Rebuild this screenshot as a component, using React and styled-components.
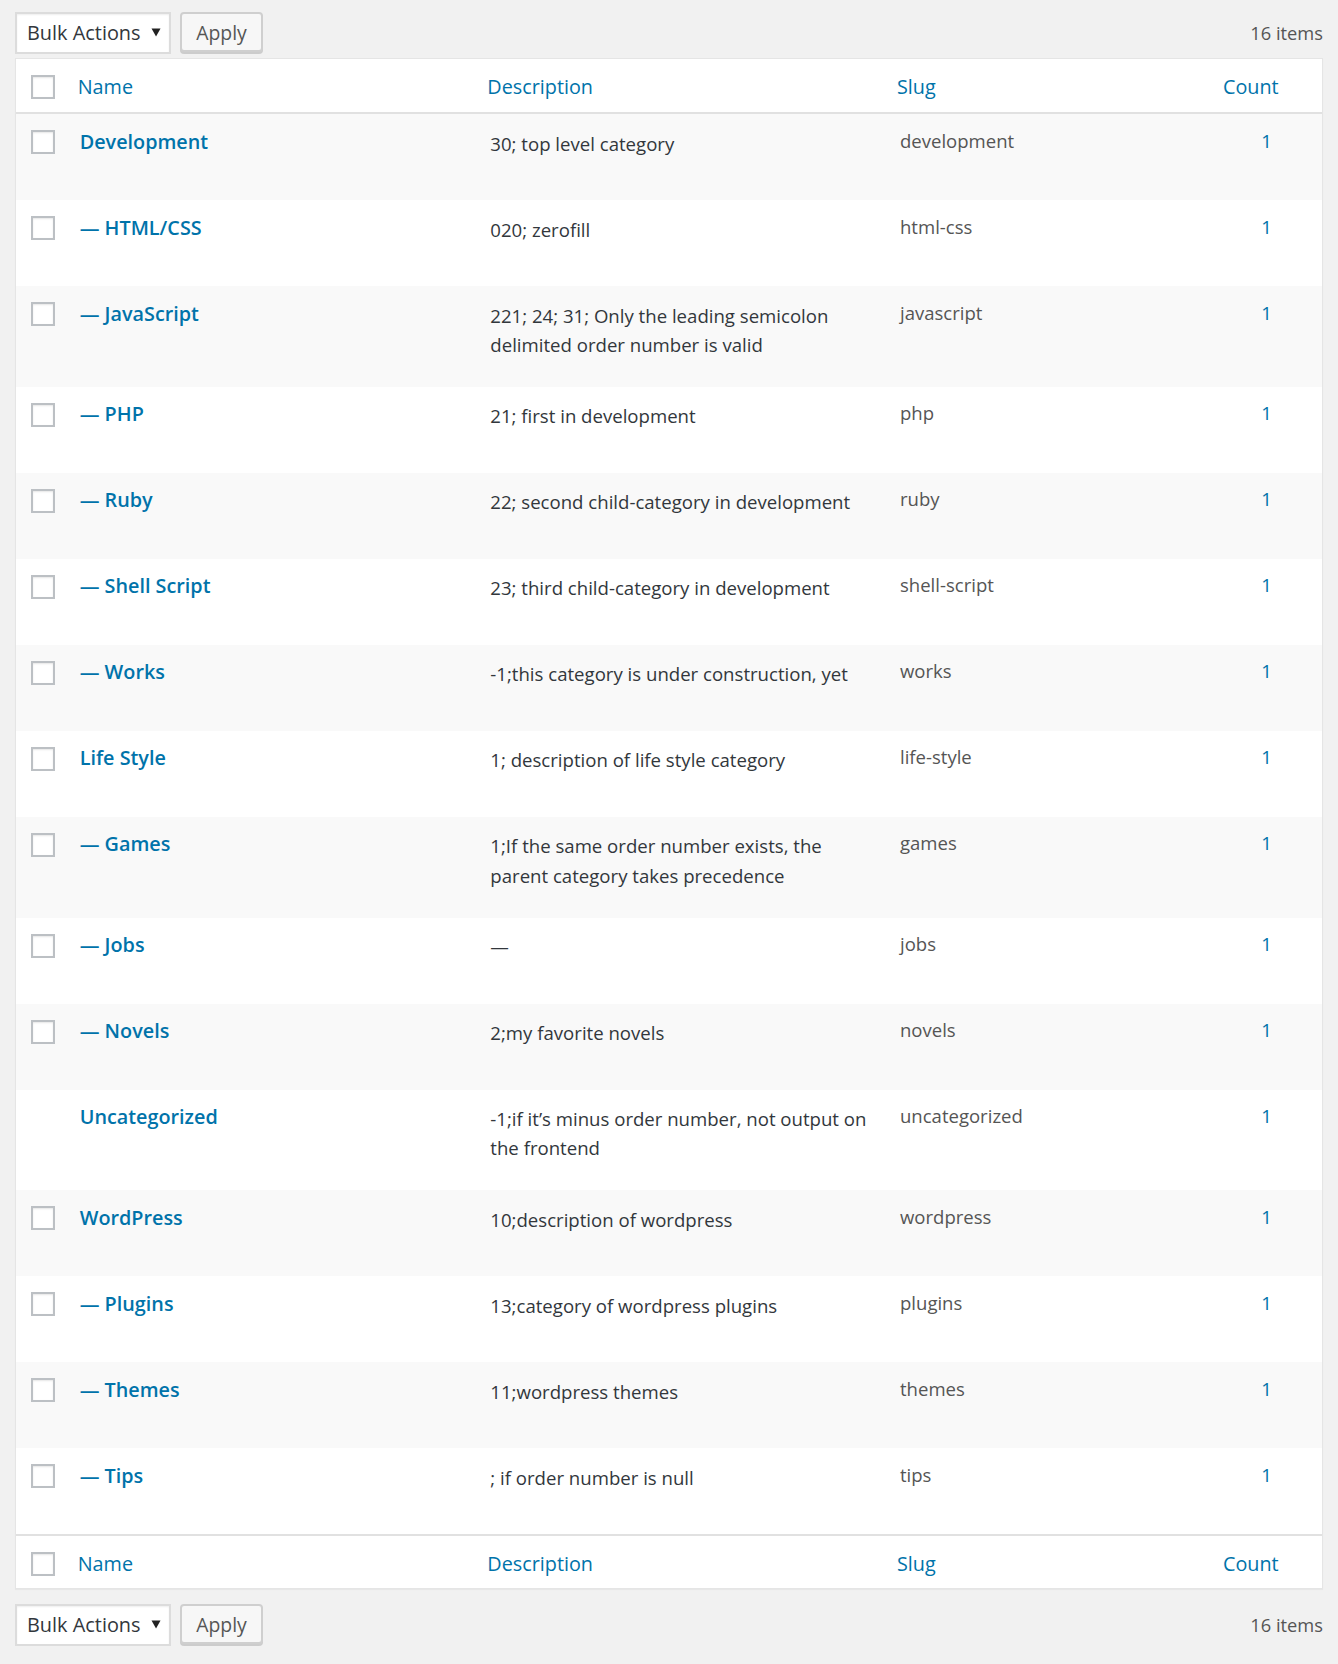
import React from 'react';
import styled, { createGlobalStyle } from 'styled-components';

const GlobalStyle = createGlobalStyle`
  html, body { margin: 0; padding: 0; background: #f1f1f1; }
  body {
    font-family: "Open Sans", "Noto Sans", "Liberation Sans", sans-serif;
    color: #444;
  }
  * { box-sizing: border-box; }
`;

const Page = styled.div`
  padding: 11px 15px 17px 15px;
`;

const TableNav = styled.div`
  display: flex;
  align-items: center;
  justify-content: space-between;
  height: 43px;
  margin: ${(p) => (p.$bottom ? '14px 0 0' : '0 0 4px')};
`;

const Actions = styled.div`
  display: flex;
  align-items: center;
  gap: 9px;
`;

const Select = styled.div`
  display: flex;
  align-items: center;
  justify-content: space-between;
  width: 156px;
  height: 42px;
  padding: 0 8px 0 10px;
  background: #fff;
  border: 2px solid #dcdcdc;
  box-shadow: inset 0 1px 2px rgba(0, 0, 0, 0.07);
  font-size: 19.9px;
  color: #32373c;
`;

const Button = styled.div`
  display: flex;
  align-items: center;
  justify-content: center;
  width: 83px;
  height: 40px;
  margin-top: -1px;
  background: #f7f7f7;
  border: 2px solid #cfcfcf;
  border-radius: 4px;
  box-shadow: 0 2px 0 #cccccc;
  font-size: 19.4px;
  color: #555;
`;

const Displaying = styled.div`
  font-size: 18.3px;
  color: #555;
`;

const Table = styled.div`
  background: #fff;
  border: 1px solid #e5e5e5;
  box-shadow: 0 1px 1px rgba(0, 0, 0, 0.04);
`;

const Grid = styled.div`
  display: grid;
  grid-template-columns: 49.7px 1fr 1fr 326px 111px;
`;

const HeadRow = styled(Grid)`
  background: #fff;
  ${(p) => (p.$foot ? 'border-top: 2px solid #e1e1e1; height: 54px;' : 'border-bottom: 2px solid #e1e1e1; height: 55px;')}
`;

const HeadCell = styled.div`
  padding: 12.8px 12px 0;
  font-size: 19.8px;
  line-height: 29px;
  color: #0073aa;
  white-space: nowrap;
`;

const CheckCell = styled.div`
  padding: ${(p) => (p.$head ? '15.7px' : '16px')} 0 0 15px;
`;

const Checkbox = styled.span`
  display: block;
  width: 24px;
  height: 24px;
  background: #fff;
  border: 2px solid #bcc0c4;
  box-shadow: inset 0 1px 2px rgba(0, 0, 0, 0.1);
`;

const Row = styled(Grid)`
  background: ${(p) => (p.$alt ? '#f9f9f9' : '#fff')};
`;

const NameCell = styled.div`
  padding: 12.5px 14px 11.5px;
`;

const Title = styled.div`
  font-size: 19.8px;
  font-weight: 600;
  line-height: 29.25px;
  color: #0073aa;
  white-space: nowrap;
`;

const RowActions = styled.div`
  height: 32.75px;
`;

const DescCell = styled.div`
  padding: 14.5px 15px 27.75px;
  font-size: 18.6px;
  line-height: 29.25px;
  color: #32373c;
`;

const Line = styled.span`
  display: block;
  white-space: nowrap;
`;

const SlugCell = styled.div`
  padding: 11.5px 15px;
  font-size: 18.55px;
  line-height: 29.25px;
  color: #555;
`;

const CountCell = styled.div`
  padding: 11.5px 10px;
  font-size: 18.5px;
  line-height: 29.25px;
  color: #0073aa;
  text-align: center;
`;

const rows = [
  { name: 'Development', desc: ['30; top level category'], slug: 'development' },
  { name: '— HTML/CSS', desc: ['020; zerofill'], slug: 'html-css' },
  { name: '— JavaScript', desc: ['221; 24; 31; Only the leading semicolon', 'delimited order number is valid'], slug: 'javascript' },
  { name: '— PHP', desc: ['21; first in development'], slug: 'php' },
  { name: '— Ruby', desc: ['22; second child-category in development'], slug: 'ruby' },
  { name: '— Shell Script', desc: ['23; third child-category in development'], slug: 'shell-script' },
  { name: '— Works', desc: ['-1;this category is under construction, yet'], slug: 'works' },
  { name: 'Life Style', desc: ['1; description of life style category'], slug: 'life-style' },
  { name: '— Games', desc: ['1;If the same order number exists, the', 'parent category takes precedence'], slug: 'games' },
  { name: '— Jobs', desc: ['—'], slug: 'jobs' },
  { name: '— Novels', desc: ['2;my favorite novels'], slug: 'novels' },
  { name: 'Uncategorized', desc: ['-1;if it’s minus order number, not output on', 'the frontend'], slug: 'uncategorized', noCheck: true },
  { name: 'WordPress', desc: ['10;description of wordpress'], slug: 'wordpress' },
  { name: '— Plugins', desc: ['13;category of wordpress plugins'], slug: 'plugins' },
  { name: '— Themes', desc: ['11;wordpress themes'], slug: 'themes' },
  { name: '— Tips', desc: ['; if order number is null'], slug: 'tips' },
];

const Arrow = () => (
  <svg width="10" height="9" viewBox="0 0 10 9" aria-hidden="true">
    <path d="M0.5 0.5 L9.5 0.5 L5 8.5 Z" fill="#222" />
  </svg>
);

const Nav = ({ bottom }) => (
  <TableNav $bottom={bottom}>
    <Actions>
      <Select>
        <span>Bulk Actions</span>
        <Arrow />
      </Select>
      <Button>Apply</Button>
    </Actions>
    <Displaying>16 items</Displaying>
  </TableNav>
);

const Header = ({ foot }) => (
  <HeadRow $foot={foot}>
    <CheckCell $head>
      <Checkbox />
    </CheckCell>
    <HeadCell>Name</HeadCell>
    <HeadCell>Description</HeadCell>
    <HeadCell>Slug</HeadCell>
    <HeadCell>Count</HeadCell>
  </HeadRow>
);

export default function App() {
  return (
    <Page>
      <GlobalStyle />
      <Nav />
      <Table>
        <Header />
        {rows.map((r, i) => (
          <Row key={r.slug} $alt={i % 2 === 0}>
            <CheckCell>{!r.noCheck && <Checkbox />}</CheckCell>
            <NameCell>
              <Title>{r.name}</Title>
              <RowActions />
            </NameCell>
            <DescCell>
              {r.desc.map((l) => (
                <Line key={l}>{l}</Line>
              ))}
            </DescCell>
            <SlugCell>{r.slug}</SlugCell>
            <CountCell>1</CountCell>
          </Row>
        ))}
        <Header foot />
      </Table>
      <Nav bottom />
    </Page>
  );
}
